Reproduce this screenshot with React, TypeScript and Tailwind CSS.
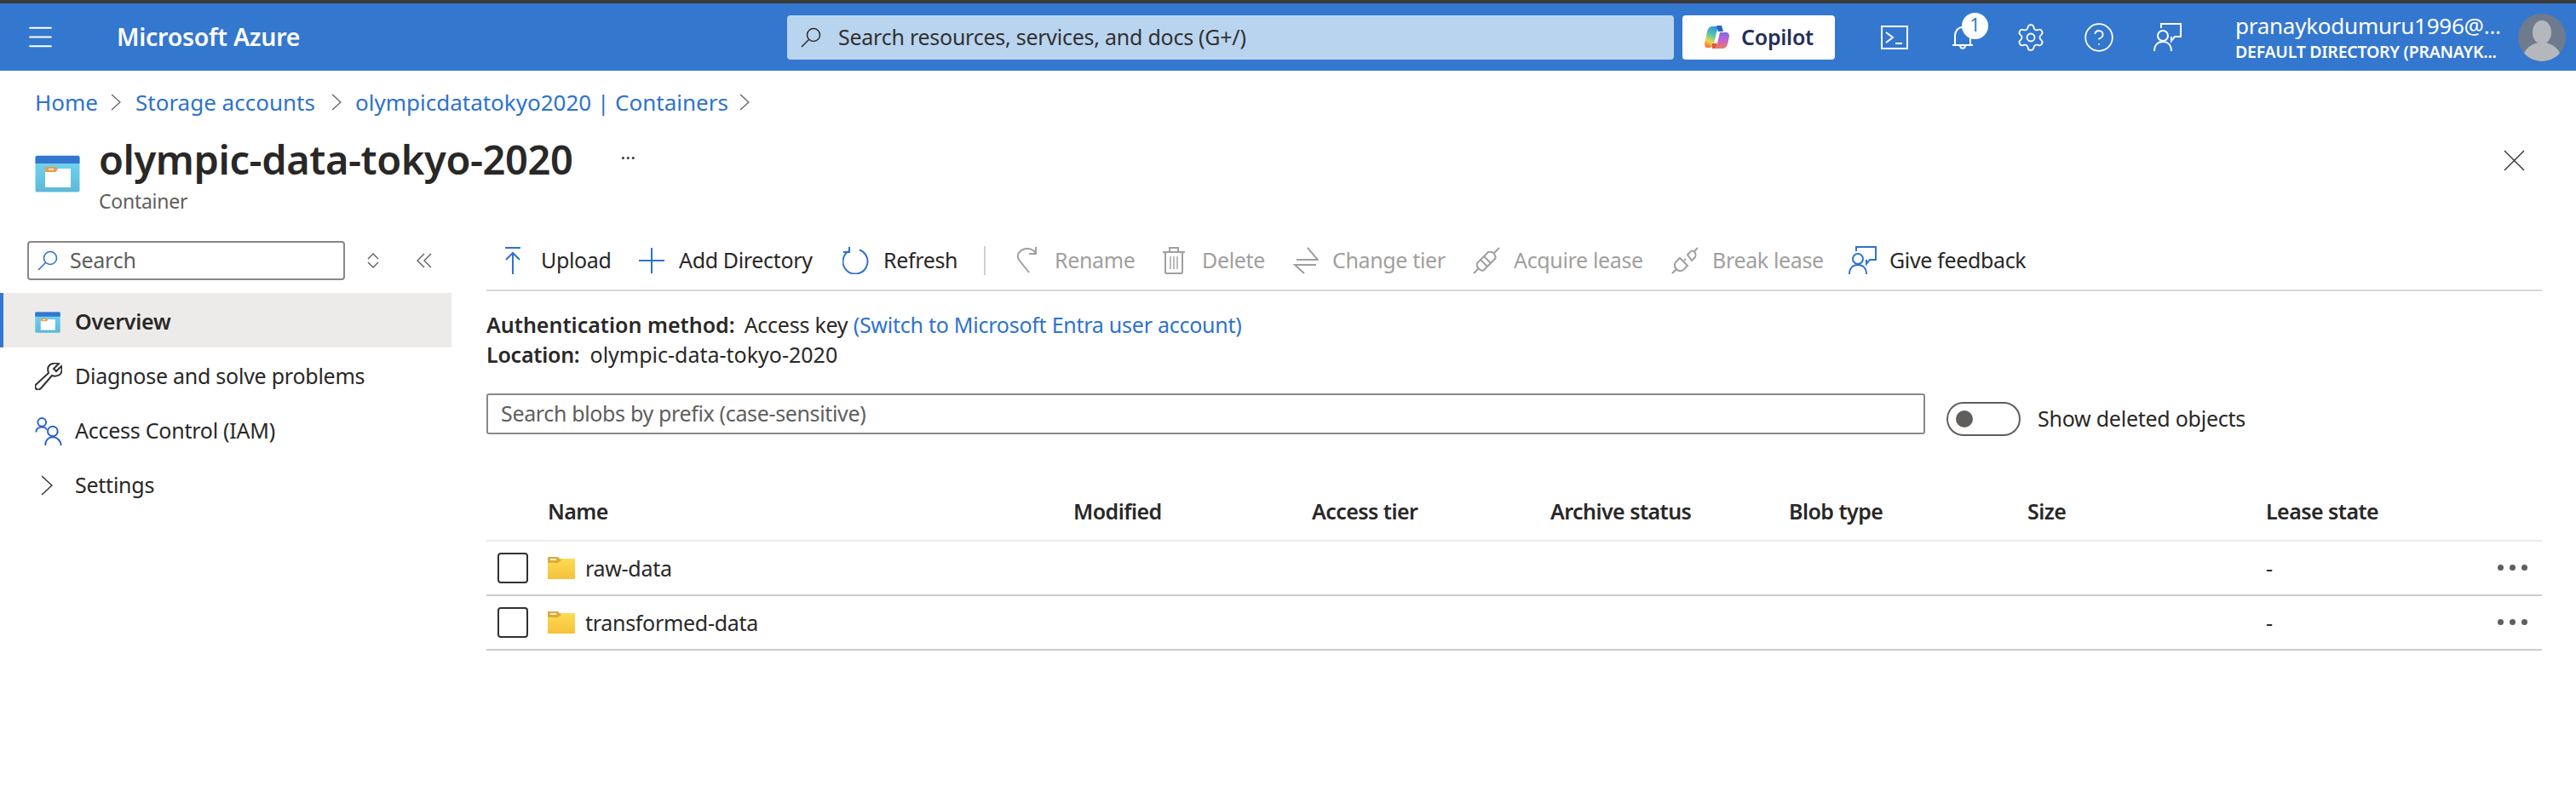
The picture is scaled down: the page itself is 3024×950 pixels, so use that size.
import { Menu, Settings, CircleHelp } from 'lucide-react'

// Small svg icons that lucide has no close match for
function ContainerIcon({ className }: { className: string }) {
  return (
    <svg viewBox="0 0 53 44" className={className}>
      <defs>
        <linearGradient id="cont" x1="0" y1="0" x2="0" y2="1">
          <stop offset="0" stopColor="#72d9f4" />
          <stop offset="1" stopColor="#5db8d9" />
        </linearGradient>
      </defs>
      <rect x="0.5" y="0.5" width="52" height="43" rx="2" fill="url(#cont)" />
      <path d="M0.5 10V3a2 2 0 0 1 2-2h48a2 2 0 0 1 2 2v7z" fill="#3477cf" />
      <rect x="12" y="16" width="30" height="22" fill="#fff" />
      <path d="M12 14h12l3 3-3 3H12z" fill="#ec9b49" />
      <rect x="16" y="16" width="6" height="1.5" fill="#fff" />
    </svg>
  )
}

function FolderIcon() {
  return (
    <svg viewBox="0 0 32 26" className="w-[32px] h-[26px] mr-[12px]">
      <defs>
        <linearGradient id="fold" x1="0" y1="0" x2="0" y2="1">
          <stop offset="0" stopColor="#fbdc52" />
          <stop offset="1" stopColor="#f6c13c" />
        </linearGradient>
      </defs>
      <rect x="0" y="2" width="32" height="24" fill="url(#fold)" />
      <path d="M0 0h12l4 4-4 3H0z" fill="#dcab3c" />
      <rect x="3" y="2" width="7" height="2" fill="#f5edd0" />
    </svg>
  )
}

function Feedback({ color, className }: { color: string; className: string }) {
  return (
    <svg viewBox="0 0 33 33" fill="none" stroke={color} strokeWidth="2" className={className}>
      <path d="M9 6V1h23v15h-7l-4 5v-5" />
      <circle cx="11" cy="15" r="6" />
      <path d="M1 33c0-7 4-11 10-11s10 4 10 11" />
    </svg>
  )
}

function SearchGlass({ color, className }: { color: string; className: string }) {
  return (
    <svg viewBox="0 0 24 24" fill="none" stroke={color} strokeWidth="1.6" className={className}>
      <circle cx="15" cy="9" r="7.5" />
      <path d="M9.5 14.5 1 23" />
    </svg>
  )
}

function Crumb({ className }: { className: string }) {
  return (
    <svg viewBox="0 0 24 20" fill="none" stroke="#605e5c" strokeWidth="1.2" className={className}>
      <path d="M7 1l10 9-10 9" />
    </svg>
  )
}

const gray = '#a19f9d'
const blue = '#2e72ce'

const tools = [
  {
    label: 'Upload', width: 'w-[157px]', slot: 'w-[42px]', disabled: false,
    icon: (
      <svg viewBox="0 0 18 32" fill="none" stroke={blue} strokeWidth="2" className="w-[18px] h-[32px]">
        <path d="M0 1h18M9 32V7M1 15l8-8 8 8" />
      </svg>
    ),
  },
  {
    label: 'Add Directory', width: 'w-[239px]', slot: 'w-[47px]', disabled: false,
    icon: (
      <svg viewBox="0 0 30 30" fill="none" stroke={blue} strokeWidth="2" className="w-[30px] h-[30px]">
        <path d="M0 15h30M15 0v30" />
      </svg>
    ),
  },
  {
    label: 'Refresh', width: 'w-[166px]', slot: 'w-[48px]', disabled: false,
    icon: (
      <svg viewBox="0 0 32 32" fill="none" stroke={blue} strokeWidth="2" className="w-[32px] h-[32px]">
        <path d="M20 3.5A14.5 14.5 0 1 1 7 5" />
        <path d="M8 0v6H1" />
      </svg>
    ),
  },
]

const tools2 = [
  {
    label: 'Rename', width: 'w-[172px]', slot: 'w-[45px]', disabled: true,
    icon: (
      <svg viewBox="0 0 24 31" fill="none" stroke={gray} strokeWidth="2" className="w-[24px] h-[31px]">
        <path d="M15 30 3 15C-1 8 6 2 13 2c4 0 8 2 10 6" />
        <path d="M23 0v8h-8" />
      </svg>
    ),
  },
  {
    label: 'Delete', width: 'w-[153px]', slot: 'w-[46px]', disabled: true,
    icon: (
      <svg viewBox="0 0 26 32" fill="none" stroke={gray} strokeWidth="2" className="w-[26px] h-[32px]">
        <path d="M0 6h26M8 6V1h10v5M3 6v24a1 1 0 0 0 1 1h18a1 1 0 0 0 1-1V6" />
        <path d="M9 11v15M13 11v15M17 11v15" strokeWidth="1.4" />
      </svg>
    ),
  },
  {
    label: 'Change tier', width: 'w-[211px]', slot: 'w-[46px]', disabled: true,
    icon: (
      <svg viewBox="0 0 30 32" fill="none" stroke={gray} strokeWidth="2" className="w-[30px] h-[32px]">
        <path d="M4 15h25L17 1" />
        <path d="M27 21H2l11 10" />
      </svg>
    ),
  },
  {
    label: 'Acquire lease', width: 'w-[233px]', slot: 'w-[48px]', disabled: true,
    icon: (
      <svg viewBox="0 0 32 32" fill="none" stroke={gray} strokeWidth="2" className="w-[32px] h-[32px]">
        <path d="M1 31l6-6M31 1l-6 6" />
        <path d="M9 27c-3-2-5-5-4-8L18 6c4-1 7 1 8 4 1 2 1 3 0 4L13 27c-1 1-3 1-4 0z" />
        <path d="M13 11l8 8M9 15l8 8" />
      </svg>
    ),
  },
  {
    label: 'Break lease', width: 'w-[208px]', slot: 'w-[48px]', disabled: true,
    icon: (
      <svg viewBox="0 0 32 32" fill="none" stroke={gray} strokeWidth="2" className="w-[32px] h-[32px]">
        <path d="M1 31l5-5M31 1l-4 4" />
        <path d="M6 26c-2-2-3-5-1-8l5-5 9 9-5 5c-3 2-6 1-8-1z" />
        <path d="M19 9l4-4c2-1 4 0 5 2s1 3 0 5l-4 4z" />
        <path d="M15 16l2-2" />
      </svg>
    ),
  },
  {
    label: 'Give feedback', width: 'w-[240px]', slot: 'w-[48px]', disabled: false,
    icon: <Feedback color={blue} className="w-[33px] h-[33px]" />,
  },
]

const columns = ['Modified', 'Access tier', 'Archive status', 'Blob type', 'Size']

function ToolButton({ item }: { item: (typeof tools)[number] }) {
  return (
    <div className={`flex items-center h-[40px] ${item.width}`}>
      <div className={`flex items-center shrink-0 ${item.slot}`}>{item.icon}</div>
      <span className={`whitespace-nowrap tracking-[-0.35px] ${item.disabled ? 'text-[#a19f9d]' : 'text-[#292827]'}`}>{item.label}</span>
    </div>
  )
}

function BlobRow({ name }: { name: string }) {
  return (
    <div className="grid grid-cols-[72px_2017px_1fr_52px] h-[64px] items-center border-b-2 border-[#cccccc]">
      <div className="pl-[13px]">
        <div className="w-[36px] h-[36px] border-2 border-[#323130] rounded-[4px]" />
      </div>
      <div className="flex items-center">
        <FolderIcon />
        <span className="mt-[2px] tracking-[-0.3px]">{name}</span>
      </div>
      <span className="mt-[2px]">-</span>
      <div className="flex gap-[7px] mb-[2px]">
        <span className="w-[7px] h-[7px] rounded-full bg-[#605e5c]" />
        <span className="w-[7px] h-[7px] rounded-full bg-[#605e5c]" />
        <span className="w-[7px] h-[7px] rounded-full bg-[#605e5c]" />
      </div>
    </div>
  )
}

export default function App() {
  return (
    <div className="min-h-[950px] bg-white text-[#292827] text-[25px] font-['Noto_Sans',sans-serif] tracking-[-0.25px] overflow-hidden">
      <div className="h-[4px] bg-[#3b3b3b]" />

      {/* Top bar */}
      <header className="h-[79px] bg-[#3477cf] flex items-center text-white">
        <Menu size={37} strokeWidth={1.4} className="ml-[29px] shrink-0" />
        <div className="ml-[71px] w-[787px] text-[28.5px] font-semibold whitespace-nowrap">Microsoft Azure</div>
        <div className="w-[1041px] h-[52px] bg-[#b9d4ef] rounded-[4px] flex items-center pl-[16px] text-[#323130]">
          <SearchGlass color="#323130" className="w-[24px] h-[24px]" />
          <span className="ml-[20px] whitespace-nowrap">Search resources, services, and docs (G+/)</span>
        </div>
        <div className="ml-[10px] w-[179px] h-[52px] bg-white rounded-[4px] flex items-center pl-[26px] text-[#242f58] font-semibold">
          <svg viewBox="0 0 29 28" className="w-[29px] h-[28px] shrink-0">
            <defs>
              <linearGradient id="cp1" x1="0.7" y1="0" x2="0.3" y2="1">
                <stop offset="0" stopColor="#2f8be8" />
                <stop offset="0.45" stopColor="#57c8a8" />
                <stop offset="0.75" stopColor="#f2d64b" />
                <stop offset="1" stopColor="#ef7a3a" />
              </linearGradient>
              <linearGradient id="cp2" x1="0.5" y1="0" x2="0.5" y2="1">
                <stop offset="0" stopColor="#7b6be6" />
                <stop offset="0.5" stopColor="#c262cf" />
                <stop offset="1" stopColor="#f0785a" />
              </linearGradient>
            </defs>
            <path d="M9 1h11c-3 1-5 3-6 7l-3 13c-1 3-3 5-6 5H3c-2 0-3-2-3-5l3-14C4 3 6 1 9 1z" fill="url(#cp1)" />
            <path d="M18 8h7c3 0 4 2 4 5l-2 9c-1 3-3 5-7 5H9c3-1 5-3 6-6l3-13z" fill="url(#cp2)" />
            <path d="M14 0h6l2 7h-6z" fill="#2a64c4" />
            <path d="M9 21h6l-3 6H9z" fill="#e4583a" />
          </svg>
          <span className="ml-[14px]">Copilot</span>
        </div>

        <svg viewBox="0 0 32 28" fill="none" stroke="#fff" strokeWidth="2" className="ml-[54px] w-[32px] h-[28px] shrink-0">
          <rect x="1" y="1" width="30" height="26" />
          <path d="M6 8l8 6-8 6M17 21h8" />
        </svg>
        <div className="relative ml-[52px] w-[32px] h-[32px] shrink-0">
          <svg viewBox="0 0 24 28" fill="none" stroke="#fff" strokeWidth="2" className="w-[24px] h-[28px] mt-[2px]">
            <path d="M0 23h24M3 23V12C3 6 7 2 12 2s9 4 9 10v11M9 23c0 5 6 5 6 0" />
          </svg>
          <div className="absolute -top-[13px] left-[11px] w-[31px] h-[31px] rounded-full bg-white text-[#3477cf] text-[21px] flex items-center justify-center">1</div>
        </div>
        <Settings size={36} strokeWidth={1.2} className="ml-[42px] shrink-0" />
        <CircleHelp size={38} strokeWidth={1.15} className="ml-[43px] shrink-0" />
        <Feedback color="#fff" className="ml-[45px] w-[33px] h-[33px] shrink-0" />

        <div className="ml-[63px] w-[332px] shrink-0">
          <div className="text-[26px] leading-[32px] whitespace-nowrap">pranaykodumuru1996@...</div>
          <div className="text-[19.5px] leading-[24px] mt-[3px] font-semibold whitespace-nowrap">DEFAULT DIRECTORY (PRANAYK...</div>
        </div>
        <svg viewBox="0 0 56 56" className="w-[56px] h-[56px] shrink-0">
          <clipPath id="av"><circle cx="28" cy="28" r="28" /></clipPath>
          <g clipPath="url(#av)">
            <rect width="56" height="56" fill="#6e7b8d" />
            <ellipse cx="28" cy="22" rx="11" ry="14" fill="#b4b7bc" />
            <ellipse cx="28" cy="52" rx="22" ry="18" fill="#b4b7bc" />
          </g>
        </svg>
      </header>

      {/* Breadcrumb */}
      <nav className="flex items-center h-[38px] mt-[18px] pl-[41px] text-[#2e72ce] text-[26px] tracking-[0px]">
        <span className="w-[78px] whitespace-nowrap">Home</span>
        <Crumb className="w-[24px] h-[20px] ml-[5px]" />
        <span className="w-[216px] ml-[11px] whitespace-nowrap">Storage accounts</span>
        <Crumb className="w-[24px] h-[20px] ml-[8px]" />
        <span className="w-[438px] ml-[10px] whitespace-nowrap">olympicdatatokyo2020 | Containers</span>
        <Crumb className="w-[24px] h-[20px] ml-[7px]" />
      </nav>

      {/* Page title */}
      <div className="flex pl-[41px] pr-[60px] mt-[19px] h-[125px]">
        <ContainerIcon className="w-[53px] h-[44px] mt-[24px] mr-[22px]" />
        <div>
          <div className="flex items-center h-[58px]">
            <h1 className="text-[47px] leading-[58px] font-semibold whitespace-nowrap tracking-[-0.42px]">olympic-data-tokyo-2020</h1>
            <span className="ml-[56px] mb-[6px] text-[#323130] text-[22px] tracking-normal">···</span>
          </div>
          <div className="text-[23px] text-[#605e5c] leading-[30px] mt-[5px]">Container</div>
        </div>
        <svg viewBox="0 0 25 25" fill="none" stroke="#323130" strokeWidth="1.4" className="ml-auto mt-[18px] w-[25px] h-[25px]">
          <path d="M1 1l23 23M24 1 1 24" />
        </svg>
      </div>

      <div className="flex">
        {/* Sidebar */}
        <aside className="w-[530px] shrink-0">
          <div className="flex items-center h-[46px] pl-[32px]">
            <div className="w-[373px] h-[46px] border-2 border-[#8a8886] rounded-[4px] flex items-center pl-[10px] text-[#605e5c]">
              <SearchGlass color={blue} className="w-[24px] h-[24px]" />
              <span className="ml-[14px]">Search</span>
            </div>
            <svg viewBox="0 0 14 18" fill="none" stroke="#605e5c" strokeWidth="1.4" className="ml-[26px] w-[14px] h-[18px]">
              <path d="M1 7l6-6 6 6M1 11l6 6 6-6" />
            </svg>
            <svg viewBox="0 0 18 18" fill="none" stroke="#605e5c" strokeWidth="1.4" className="ml-[44px] w-[18px] h-[18px]">
              <path d="M9 1 1 9l8 8M17 1 9 9l8 8" />
            </svg>
          </div>
          <div className="mt-[15px] h-[64px] pt-[4px] bg-[#edebe9] border-l-4 border-[#3477cf] flex items-center pl-[37px] font-semibold">
            <ContainerIcon className="w-[30px] h-[25px] mr-[17px]" />
            <span>Overview</span>
          </div>
          <div className="h-[64px] pt-[4px] flex items-center pl-[41px]">
            <svg viewBox="0 0 32 32" fill="none" stroke="#323130" strokeWidth="2" className="w-[32px] h-[32px] mr-[15px]">
              <path d="M17 3c3-3 9-3 11-2l-6 6 3 3 6-6c1 3 1 8-2 10-3 2-6 2-9 1L7 30c-2 2-5 2-6 0-1-2-1-4 1-5l14-13c-1-3-1-7 1-9z" />
            </svg>
            <span>Diagnose and solve problems</span>
          </div>
          <div className="h-[64px] pt-[4px] flex items-center pl-[41px]">
            <svg viewBox="0 0 32 34" fill="none" stroke="#2862c9" strokeWidth="2" className="w-[32px] h-[33px] mr-[15px]">
              <circle cx="8" cy="6" r="5" />
              <path d="M1 18c0-4 3-6 7-6 3 0 5 1 6 3" />
              <circle cx="21" cy="17" r="6" />
              <path d="M12 34c0-6 4-10 9-10s10 4 10 10" />
            </svg>
            <span>Access Control (IAM)</span>
          </div>
          <div className="h-[64px] pt-[4px] flex items-center pl-[48px]">
            <svg viewBox="0 0 14 24" fill="none" stroke="#323130" strokeWidth="1.5" className="w-[14px] h-[24px] mr-[26px]">
              <path d="M1 1l12 11L1 23" />
            </svg>
            <span>Settings</span>
          </div>
        </aside>

        {/* Main content */}
        <main className="flex-1 pl-[41px] pr-[40px] -mt-[4px]">
          <div className="flex items-center h-[63px] pl-[22px] border-b-2 border-[#d8d8d8] pb-[8px]">
            {tools.map((t) => <ToolButton key={t.label} item={t} />)}
            <div className="w-[2px] h-[34px] bg-[#d2d0ce] mr-[36px]" />
            {tools2.map((t) => <ToolButton key={t.label} item={t} />)}
          </div>

          <div className="mt-[22px] leading-[35px]">
            <div className="whitespace-nowrap">
              <span className="font-semibold mr-[11px] tracking-[0px]">Authentication method:</span>
              Access key <span className="text-[#2e72ce]">(Switch to Microsoft Entra user account)</span>
            </div>
            <div className="whitespace-nowrap tracking-[0px]">
              <span className="font-semibold mr-[12px] tracking-[-0.25px]">Location:</span>olympic-data-tokyo-2020
            </div>
          </div>

          <div className="flex items-start h-[48px] mt-[28px]">
            <div className="w-[1689px] h-[48px] border-2 border-[#8a8886] rounded-[3px] flex items-center pl-[15px] text-[#605e5c] tracking-[-0.35px]">
              Search blobs by prefix (case-sensitive)
            </div>
            <div className="ml-[25px] mt-[10px] w-[87px] h-[40px] border-2 border-[#605e5c] rounded-full flex items-center pl-[9px]">
              <span className="w-[20px] h-[20px] rounded-full bg-[#605e5c]" />
            </div>
            <span className="ml-[20px] mt-[12px] leading-[34px] whitespace-nowrap">Show deleted objects</span>
          </div>

          <div className="mt-[66px] grid grid-cols-[72px_617px_280px_280px_280px_280px_280px_1fr] h-[60px] items-center font-semibold tracking-[-0.55px] border-b-2 border-[#ebebeb] pb-[8px]">
            <span />
            <span>Name</span>
            {columns.map((c) => <span key={c}>{c}</span>)}
            <span>Lease state</span>
          </div>
          <BlobRow name="raw-data" />
          <BlobRow name="transformed-data" />
        </main>
      </div>
    </div>
  )
}
